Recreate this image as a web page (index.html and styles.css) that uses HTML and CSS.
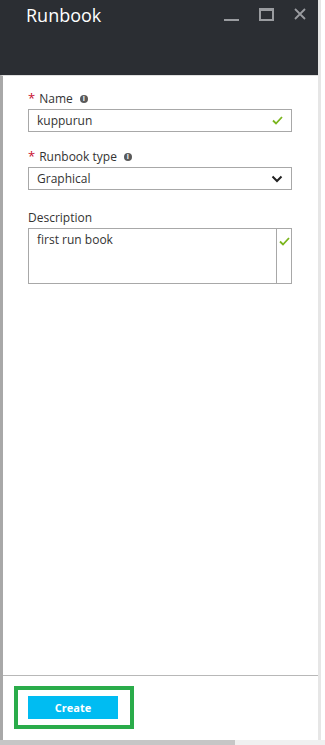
FILE: index.html
```html
<!DOCTYPE html>
<html lang="en">
  <head>
    <meta charset="UTF-8" />
    <meta name="viewport" content="width=device-width, initial-scale=1.0" />
    <title>Runbook</title>
    <link rel="stylesheet" href="styles.css">
  </head>
  <body>
    <div class="blade">
      <div class="header">
        <h1 class="title">Runbook</h1>
        <div class="controls">
          <span class="ctl minimize"></span>
          <span class="ctl maximize"></span>
          <svg class="ctl close" width="12" height="12" viewBox="0 0 12 12">
            <path d="M1 1 L11 11 M11 1 L1 11" stroke="#9a9ca0" stroke-width="1.8" />
          </svg>
        </div>
      </div>
      <div class="content">
        <div class="form">
          <div class="field">
            <label class="label"><span class="req">*</span> Name <span class="info">i</span></label>
            <div class="box">
              <span class="value">kuppurun</span>
              <svg class="check" width="11" height="9" viewBox="0 0 11 9">
                <path d="M1 4.5 L4 7.5 L10 1" fill="none" stroke="#7ab51d" stroke-width="1.8" />
              </svg>
            </div>
          </div>
          <div class="field select-field">
            <label class="label"><span class="req">*</span> Runbook type <span class="info">i</span></label>
            <div class="box">
              <span class="value">Graphical</span>
              <svg class="chevron" width="12" height="8" viewBox="0 0 12 8">
                <path d="M1.5 1.5 L6 6 L10.5 1.5" fill="none" stroke="#222" stroke-width="2" />
              </svg>
            </div>
          </div>
          <div class="field">
            <label class="label">Description</label>
            <div class="box area">
              <span class="value">first run book</span>
              <div class="gutter">
                <svg class="check" width="11" height="9" viewBox="0 0 11 9">
                  <path d="M1 4.5 L4 7.5 L10 1" fill="none" stroke="#7ab51d" stroke-width="1.8" />
                </svg>
              </div>
            </div>
          </div>
        </div>
        <div class="footer">
          <div class="highlight">
            <button class="create">Create</button>
          </div>
        </div>
      </div>
    </div>
    <div class="hscroll"><div class="thumb"></div></div>
  </body>
</html>
```

FILE: styles.css
```css
body {
  margin: 0;
  width: 325px;
  height: 745px;
  background-color: #fff;
  font-family: "Open Sans", "Noto Sans", sans-serif;
  overflow: hidden;
}

.blade {
  display: flex;
  flex-direction: column;
  width: 321px;
  height: 740px;
  border-right: 3px solid #e6e6e6;
  box-sizing: border-box;
}

.header {
  display: flex;
  justify-content: space-between;
  height: 75px;
  background-color: #2b2e33;
  flex-shrink: 0;
}

.title {
  margin: 0;
  padding: 2px 0 0 26px;
  font-family: "Open Sans", sans-serif;
  font-weight: 400;
  font-size: 18px;
  line-height: 26px;
  color: #fff;
}

.controls {
  display: flex;
  align-items: flex-start;
  gap: 20px;
  padding: 7px 12px 0 0;
}

.ctl {
  display: block;
}

.minimize {
  width: 15px;
  height: 2px;
  margin-top: 12px;
  background-color: #9a9ca0;
}

.maximize {
  width: 11px;
  height: 8px;
  margin-top: 1px;
  border: 2px solid #9a9ca0;
  border-top-width: 3px;
}

.close {
  margin-top: 1px;
}

.content {
  display: flex;
  flex-direction: column;
  flex: 1;
  border-left: 3px solid #a8a8a8;
  border-top: 1px solid #e0e0e0;
}

.form {
  flex: 1;
  padding: 14px 26px 0 25px;
}

.field {
  margin-bottom: 16px;
}

.select-field {
  margin-bottom: 19px;
}

.label {
  display: flex;
  align-items: center;
  gap: 4px;
  font-size: 12px;
  line-height: 17px;
  color: #333;
  margin-bottom: 2px;
}

.req {
  color: #c8102e;
  font-size: 13px;
}

.info {
  display: inline-flex;
  align-items: center;
  justify-content: center;
  width: 8px;
  height: 8px;
  margin-left: 3px;
  border-radius: 50%;
  background-color: #5a5a5a;
  color: #fff;
  font-size: 7px;
  font-weight: 700;
  line-height: 8px;
}

.box {
  display: flex;
  align-items: center;
  justify-content: space-between;
  height: 23px;
  padding: 0 8px;
  border: 1px solid #a8a8a8;
  box-sizing: border-box;
  font-size: 12px;
  color: #333;
}

.box.area {
  align-items: stretch;
  height: 56px;
  padding-right: 0;
}

.area .value {
  padding-top: 2px;
}

.gutter {
  display: flex;
  justify-content: center;
  width: 14px;
  padding-top: 8px;
  border-left: 1px solid #a8a8a8;
}

.footer {
  padding: 10px 0 11px 11px;
  border-top: 1px solid #b8b8b8;
}

.highlight {
  display: inline-block;
  padding: 6px 12px 6px 10px;
  border: 4px solid #2aac4a;
}

.create {
  display: block;
  width: 90px;
  height: 23px;
  border: none;
  background-color: #00bcf2;
  color: #fff;
  font-family: "Open Sans", sans-serif;
  font-weight: 700;
  font-size: 11px;
}

.hscroll {
  height: 5px;
  background-color: #f0f0f0;
}

.thumb {
  width: 235px;
  height: 5px;
  background-color: #c6c6c6;
}
```
